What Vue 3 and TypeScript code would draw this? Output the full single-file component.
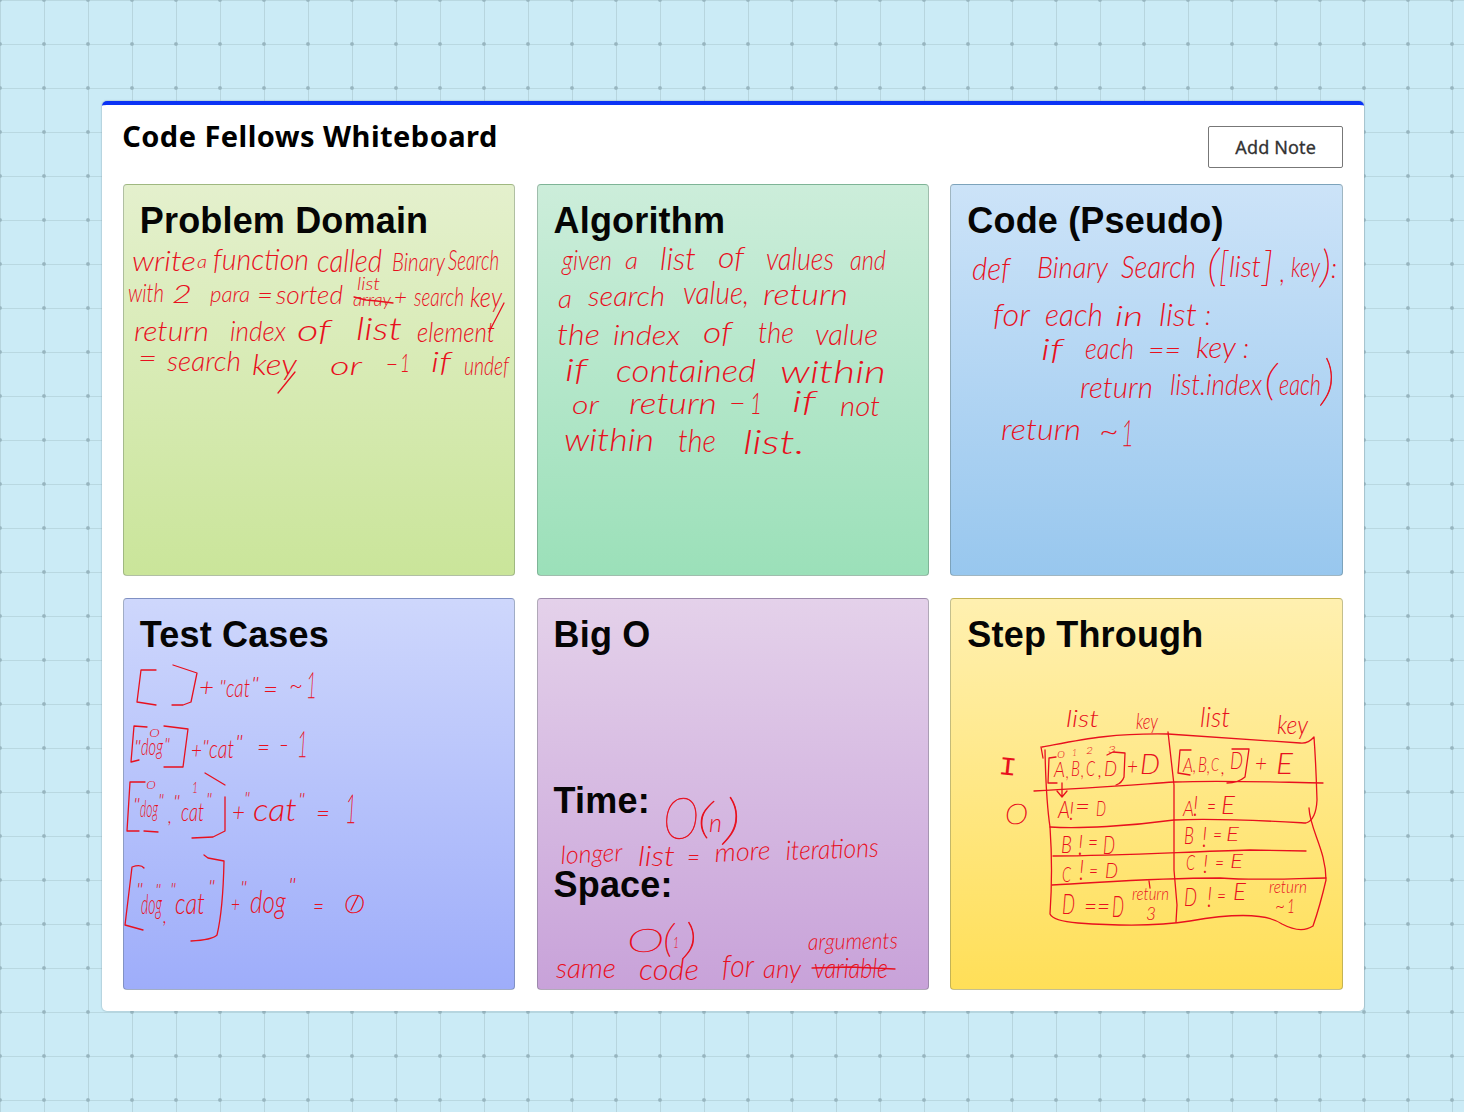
<script setup lang="ts">
// text, x, baseline, width, font size, rotation in degrees
type Word = [string, number, number, number, number?, number?]

interface Card {
  id: string
  title: string
  x: number
  y: number
  words: Word[]
  strokes?: string[]
  labels?: { text: string; id: string }[]
}

const cards: Card[] = [
  {
    id: 'problem', title: 'Problem Domain', x: 123, y: 184,
    words: [
      ['write', 132, 270, 64, 28], ['a', 197, 267, 10, 18], ['function', 213, 269, 96, 29],
      ['called', 317, 271, 65, 32], ['Binary', 392, 270, 53, 26], ['Search', 448, 269, 51, 28],
      ['with', 128, 301, 36, 26], ['2', 172, 302, 20, 26], ['para', 210, 301, 40, 22], ['=', 257, 303, 16, 24],
      ['sorted', 276, 303, 67, 25], ['list', 357, 289, 23, 18], ['array', 353, 305, 38, 18], ['+', 394, 304, 13, 22],
      ['search', 414, 305, 50, 25], ['key', 470, 306, 32, 28],
      ['return', 134, 340, 75, 28], ['index', 230, 340, 56, 28], ['of', 297, 340, 34, 30],
      ['list', 356, 339, 46, 31], ['element', 417, 341, 78, 27],
      ['=', 138, 366, 19, 24], ['search', 167, 370, 74, 28], ['key', 252, 374, 45, 30], ['or', 330, 374, 32, 25],
      ['–', 385, 370, 14, 24], ['1', 400, 371, 10, 25], ['if', 431, 371, 20, 27], ['undef', 464, 374, 45, 26],
    ],
    strokes: ['M354 297 L366 300 L377 301 L393 303', 'M504 303 L489 332', 'M295 372 L278 393'],
  },
  {
    id: 'algorithm', title: 'Algorithm', x: 537, y: 184,
    words: [
      ['given', 562, 269, 50, 28], ['a', 625, 268, 13, 24], ['list', 660, 269, 36, 31], ['of', 718, 267, 26, 29],
      ['values', 766, 269, 68, 31], ['and', 850, 269, 36, 28],
      ['a', 558, 307, 14, 25], ['search', 588, 305, 77, 28], ['value,', 683, 303, 66, 31], ['return', 763, 304, 85, 29],
      ['the', 557, 344, 43, 30], ['index', 613, 344, 67, 28], ['of', 703, 342, 29, 29], ['the', 758, 342, 36, 29], ['value', 815, 344, 63, 30],
      ['if', 565, 380, 22, 31], ['contained', 616, 381, 140, 32], ['within', 780, 382, 106, 32],
      ['or', 572, 413, 27, 26], ['return', 629, 413, 88, 29], ['–', 728, 411, 19, 28], ['1', 750, 413, 12, 30],
      ['if', 792, 411, 24, 30], ['not', 840, 415, 40, 28],
      ['within', 564, 450, 90, 31], ['the', 678, 451, 38, 31], ['list.', 743, 453, 62, 34],
    ],
  },
  {
    id: 'code', title: 'Code (Pseudo)', x: 950, y: 184,
    words: [
      ['def', 972, 279, 38, 32], ['Binary', 1037, 277, 71, 29], ['Search', 1121, 277, 75, 32],
      ['(', 1207, 280, 12, 44], ['[', 1219, 280, 9, 40], ['list', 1229, 276, 32, 29], [']', 1262, 280, 11, 40],
      [',', 1280, 281, 5, 30], ['key', 1291, 276, 29, 28], [')', 1320, 281, 11, 44], [':', 1331, 277, 6, 28],
      ['for', 993, 325, 37, 32], ['each', 1045, 325, 58, 31], ['in', 1115, 325, 28, 28], ['list', 1159, 325, 38, 32], [':', 1205, 324, 6, 28],
      ['if', 1041, 359, 22, 30], ['each', 1085, 358, 49, 30], ['==', 1148, 358, 33, 26], ['key', 1196, 357, 40, 30], [':', 1243, 357, 6, 28],
      ['return', 1080, 397, 73, 29], ['list.index', 1170, 394, 92, 29], ['(', 1264, 394, 13, 42], ['each', 1279, 394, 42, 30], [')', 1321, 398, 14, 54],
      ['return', 1001, 439, 80, 30], ['~', 1099, 440, 20, 28], ['1', 1121, 445, 13, 36],
    ],
  },
  {
    id: 'tests', title: 'Test Cases', x: 123, y: 598,
    words: [
      ['+', 199, 695, 15, 26], ['"', 219, 693, 7, 20], ['cat', 226, 696, 24, 25],
      ['"', 251, 690, 8, 20], ['=', 263, 697, 15, 24], ['~', 289, 693, 14, 24], ['1', 306, 697, 11, 36],
      ['"', 134, 752, 7, 17], ['dog', 141, 754, 22, 23], ['0', 149, 736, 11, 11], ['"', 164, 750, 6, 17],
      ['+', 191, 757, 11, 24], ['"', 202, 753, 7, 20], ['cat', 209, 757, 25, 26], ['"', 235, 749, 8, 21], ['=', 257, 755, 13, 24], ['–', 279, 751, 10, 24], ['1', 297, 756, 11, 36],
      ['0', 146, 788, 10, 11], ['"', 133, 810, 7, 18], ['dog', 140, 816, 18, 23], ['"', 158, 806, 6, 17], [',', 168, 822, 4, 20],
      ['"', 173, 807, 7, 18], ['cat', 181, 820, 23, 26], ['1', 192, 792, 6, 15], ['"', 206, 805, 6, 18],
      ['+', 232, 820, 13, 26], ['"', 244, 804, 6, 18], ['cat', 253, 820, 44, 31], ['"', 298, 806, 7, 20], ['=', 316, 821, 14, 26], ['1', 345, 822, 12, 39],
      ['"', 136, 896, 7, 19], ['dog', 141, 913, 21, 27], ['"', 155, 894, 6, 16], [',', 163, 922, 4, 22],
      ['"', 170, 895, 6, 17], ['cat', 175, 913, 30, 30], ['"', 208, 893, 7, 20],
      ['+', 231, 911, 9, 22], ['"', 240, 893, 7, 17], ['dog', 250, 912, 36, 32], ['"', 288, 892, 8, 21], ['=', 313, 914, 11, 26], ['O', 344, 912, 21, 25],
    ],
    strokes: [
      'M156 670 L141 670 L137 702 L156 705',
      'M173 665 L197 673 L191 702 L183 705 L172 705',
      'M147 727 L134 726 L131 762 L139 760',
      'M164 726 L188 729 L183 767 L164 767',
      'M145 782 L130 782 L127 831 L139 831 M144 831 L158 832',
      'M205 773 L225 785 M225 797 L225 831 L213 837 L192 838',
      'M144 868 Q141 864 132 867 L125 925 L143 930',
      'M204 855 L208 858 L224 861 Q223 910 217 935 Q212 940 191 941',
      'M351 910 L358 896',
    ],
  },
  {
    id: 'bigo', title: 'Big O', x: 537, y: 598,
    labels: [{ text: 'Time:', id: 'time' }, { text: 'Space:', id: 'space' }],
    words: [
      ['O', 663, 838, 36, 58], ['(', 697, 832, 16, 42], ['n', 709, 831, 13, 25], [')', 723, 837, 18, 54],
      ['longer', 561, 863, 62, 25, -3], ['list', 638, 865, 37, 27], ['=', 687, 865, 13, 24], ['more', 715, 861, 56, 26, -3], ['iterations', 786, 859, 93, 27, -2],
      ['O', 627, 951, 37, 31], ['(', 663, 951, 11, 37], ['1', 673, 947, 6, 16], [')', 683, 953, 14, 42],
      ['same', 556, 977, 60, 27], ['code', 639, 979, 60, 29], ['for', 722, 976, 32, 32], ['any', 763, 977, 38, 26],
      ['arguments', 808, 949, 90, 23, -1], ['variable', 814, 977, 74, 27],
    ],
    strokes: ['M812 968 L850 967 L895 969'],
  },
  {
    id: 'steps', title: 'Step Through', x: 950, y: 598,
    words: [
      ['list', 1066, 726, 33, 24], ['key', 1136, 728, 22, 21], ['list', 1200, 726, 30, 27], ['key', 1277, 733, 31, 25],
      ['I', 998, 773, 18, 26, 6], ['O', 1005, 823, 23, 27],
      ['0', 1057, 757, 8, 9], ['1', 1072, 755, 5, 10], ['2', 1086, 753, 7, 10], ['3', 1108, 752, 8, 10],
      ['A', 1054, 776, 11, 22], [',', 1066, 777, 3, 20], ['B', 1071, 775, 9, 22], [',', 1081, 776, 3, 20], ['C', 1086, 775, 9, 22],
      [',', 1098, 776, 4, 20], ['D', 1104, 775, 13, 22], ['+', 1127, 773, 11, 24], ['D', 1140, 773, 20, 27],
      ['A', 1183, 771, 10, 20], [',', 1193, 771, 3, 20], ['B', 1198, 771, 9, 21], [',', 1207, 772, 3, 20], ['C', 1211, 770, 8, 18],
      [',', 1221, 773, 4, 20], ['D', 1230, 768, 13, 23], ['+', 1255, 770, 12, 23], ['E', 1276, 773, 17, 29],
      ['A', 1058, 817, 12, 23], ['!', 1069, 819, 5, 25], ['=', 1075, 815, 15, 27], ['D', 1096, 815, 10, 22],
      ['A', 1183, 815, 11, 22], ['!', 1193, 815, 5, 27], ['=', 1207, 814, 9, 23], ['E', 1221, 813, 14, 25],
      ['B', 1061, 852, 11, 23], ['!', 1078, 854, 5, 28], ['=', 1088, 850, 10, 24], ['D', 1103, 853, 12, 25],
      ['B', 1184, 843, 10, 24], ['!', 1202, 846, 5, 27], ['=', 1213, 841, 9, 22], ['E', 1226, 840, 13, 20],
      ['C', 1062, 881, 9, 22], ['!', 1079, 879, 5, 27], ['=', 1089, 877, 9, 22], ['D', 1105, 877, 13, 22],
      ['C', 1186, 869, 9, 22], ['!', 1203, 872, 5, 26], ['=', 1215, 869, 9, 22], ['E', 1230, 867, 13, 20],
      ['D', 1062, 913, 13, 27], ['==', 1084, 914, 26, 26], ['D', 1112, 916, 12, 29], ['return', 1132, 899, 37, 18], ['3', 1146, 919, 10, 18],
      ['D', 1184, 905, 13, 26], ['!', 1207, 906, 5, 27], ['=', 1217, 902, 9, 22], ['E', 1233, 899, 13, 24],
      ['return', 1269, 892, 38, 17], ['~', 1275, 912, 10, 20], ['1', 1287, 912, 8, 20],
    ],
    strokes: [
      'M1042 747 C1080 740 1110 733 1168 734 C1230 738 1285 742 1300 743 Q1308 744 1314 737 Q1316 765 1317 800 Q1316 820 1306 823 C1270 821 1220 818 1174 820 C1130 826 1080 829 1050 827',
      'M1041 747 L1043 758 M1045 750 Q1046 800 1050 827 Q1053 870 1050 914 Q1053 921 1078 923 C1120 926 1160 926 1190 921 C1230 914 1265 912 1282 924 Q1301 934 1313 926 Q1320 906 1326 880 C1326 850 1310 830 1309 808',
      'M1168 732 L1174 785 L1174 870 L1177 905 L1176 922',
      'M1034 791 C1090 788 1130 785 1174 782 C1220 780 1270 782 1323 783',
      'M1053 856 C1120 856 1180 852 1250 850 L1306 851',
      'M1052 885 C1110 882 1150 878 1220 878 C1260 881 1300 878 1326 878',
      'M1062 783 L1062 796 M1057 791 L1062 797 L1067 791',
      'M1149 881 L1150 888',
      'M1056 757 L1049 758 L1048 783 L1057 783',
      'M1107 755 L1113 752 L1125 753 L1124 777 Q1122 783 1116 785',
      'M1191 750 L1180 750 L1178 773 L1190 775',
      'M1232 749 L1249 749 L1245 777 Q1238 783 1227 783',
    ],
  },
]
</script>

<template>
  <main class="desk">
    <section class="board">
      <header class="head">
        <h1>Code Fellows Whiteboard</h1>
        <button type="button">Add Note</button>
      </header>
      <div class="cards">
        <article v-for="card in cards" :key="card.id" class="card" :class="card.id">
          <h2>{{ card.title }}</h2>
          <h2 v-for="label in card.labels" :key="label.id" :class="label.id">{{ label.text }}</h2>
          <svg class="ink" :viewBox="`${card.x} ${card.y} 392 392`">
            <text
              v-for="([text, x, y, width, size = 28, turn], i) in card.words"
              :key="i"
              :class="{ tall: size > 35 || text === 'O', serif: text === 'I' }"
              :x="x"
              :y="y + 1"
              :font-size="size"
              :textLength="width"
              lengthAdjust="spacingAndGlyphs"
              :transform="turn ? `rotate(${turn} ${x} ${y})` : undefined"
            >{{ text }}</text>
            <path v-for="d in card.strokes" :key="d" :d="d" />
          </svg>
        </article>
      </div>
    </section>
  </main>
</template>

<style>
body {
  margin: 0;
}
</style>

<style scoped>
.desk {
  box-sizing: border-box;
  width: 1464px;
  height: 1112px;
  padding: 101px 100px 0 102px;
  overflow: hidden;
  background-color: #cbebf6;
  background-image:
    radial-gradient(circle at 22px 22px, #97b5bf 0, #97b5bf 1.3px, transparent 2.4px),
    linear-gradient(90deg, transparent 21px, #b7d5de 21px, #b7d5de 22px, transparent 22px),
    linear-gradient(transparent 21px, #b9d8e1 21px, #b9d8e1 22px, transparent 22px);
  background-size: 44px 44px;
  background-position: -22px -22px, -21px -21px, -21px -21px;
}

.board {
  box-sizing: border-box;
  width: 1262px;
  height: 910px;
  padding: 0 20.8px;
  background: #fff;
  border-top: 4px solid #0b33f5;
  border-radius: 5px;
  box-shadow: 0 0 1px 1px rgba(130, 155, 165, 0.3);
}

.head {
  display: flex;
  justify-content: space-between;
  align-items: flex-start;
  height: 78.8px;
}

h1 {
  margin: 11px 0 0 -0.6px;
  font: 700 29px/40px 'Noto Sans', sans-serif;
  color: #000;
  letter-spacing: 0.46px;
  white-space: nowrap;
}

button {
  box-sizing: border-box;
  width: 135px;
  height: 42px;
  margin-top: 21px;
  padding: 0;
  font: 400 18px/38px 'Noto Sans', sans-serif;
  letter-spacing: 0.15px;
  color: #333;
  -webkit-text-stroke: 0.3px #333;
  background: #fff;
  border: 1px solid #777;
  border-radius: 2px;
}

.cards {
  display: grid;
  grid-template-columns: repeat(3, 392.6px);
  grid-auto-rows: 392.6px;
  gap: 21.2px;
}

.card {
  position: relative;
  box-sizing: border-box;
  padding: 15px 16px;
  border: 1px solid rgba(60, 80, 70, 0.3);
  border-radius: 4px;
}

.problem { background: linear-gradient(#e4f0cd, #cae59a); }
.algorithm { background: linear-gradient(#ccedda, #9be0b9); }
.code { background: linear-gradient(#cce3f8, #98c7ee); }
.tests { background: linear-gradient(#ced7fc, #9eadfa); }
.bigo { background: linear-gradient(#e4d1ea, #c8a2d9); }
.steps { background: linear-gradient(#fff0b0, #ffdf58); }

h2 {
  margin: 0;
  font: 700 36px/42px 'Liberation Sans', Arial, sans-serif;
  letter-spacing: 0.17px;
  color: #050505;
}

.time { margin-top: 124px; }
.space { margin-top: 42px; }

.ink {
  position: absolute;
  top: -1px;
  left: -1px;
  width: 392px;
  height: 392px;
  overflow: visible;
  font-family: Lato, 'Open Sans', sans-serif;
  font-style: italic;
  font-weight: 300;
}

.ink text {
  fill: #e8101e;
}

.ink .tall {
  font-weight: 100;
  stroke: #e8101e;
  stroke-width: 0.6px;
}

.ink .serif {
  font-family: 'Liberation Mono', monospace;
  font-style: normal;
}

.ink path {
  fill: none;
  stroke: #e8101e;
  stroke-width: 1.3;
  stroke-linecap: round;
  stroke-linejoin: round;
}
</style>
